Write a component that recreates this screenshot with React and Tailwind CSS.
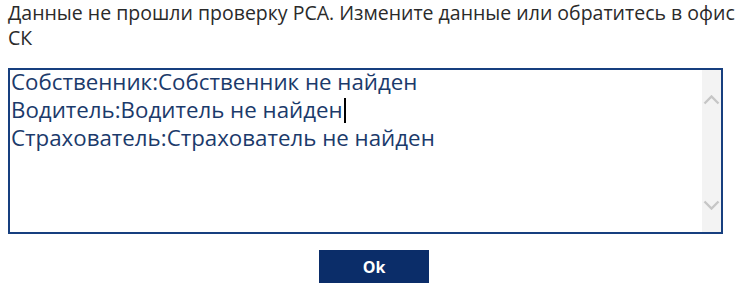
import React from 'react';

const lines = [
  'Собственник:Собственник не найден',
  'Водитель:Водитель не найден',
  'Страхователь:Страхователь не найден',
];

function Chevron({ up }) {
  return (
    <svg width="17" height="10" viewBox="0 0 17 10" fill="none">
      <polyline
        points={up ? '1.5,8.5 8.5,1.5 15.5,8.5' : '1.5,1.5 8.5,8.5 15.5,1.5'}
        stroke="#c6c6c6"
        strokeWidth="2.4"
      />
    </svg>
  );
}

export default function App() {
  return (
    <div className="w-[750px] h-[288px] bg-white px-2 font-['Open_Sans',sans-serif]">
      <p className="text-[19.5px] leading-[25px] text-[#2a2a2a]">
        Данные не прошли проверку РСА. Измените данные или обратитесь в офис СК
      </p>

      {/* message box */}
      <div className="mt-[18px] w-[715px] h-[166px] border-2 border-[#173f7f] flex">
        <div className="flex-1 px-[1px] -mt-[2px] text-[22.3px] leading-[28px] text-[#1b3a6b]">
          {lines.map((l, i) => (
            <div key={i} className="flex items-center">
              {l}
              {i === 1 && <span className="inline-block w-[2px] h-[25px] bg-black ml-[1px]" />}
            </div>
          ))}
        </div>
        <div className="w-[19px] bg-[#f3f3f3] flex flex-col items-center justify-between pt-[25px] pb-[22px]">
          <Chevron up />
          <Chevron />
        </div>
      </div>

      <div className="flex justify-center mt-[16px] pr-[2px]">
        <button className="w-[110px] h-[33px] bg-[#0b2d69] text-white text-[16px] font-bold">
          Ok
        </button>
      </div>
    </div>
  );
}
